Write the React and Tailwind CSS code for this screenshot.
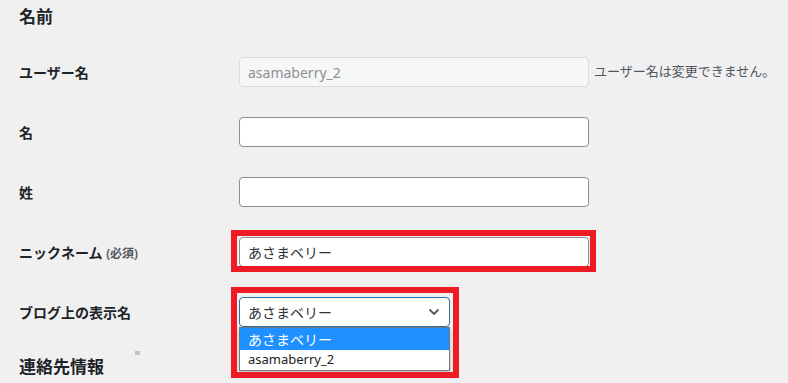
import React from 'react';

const font = { fontFamily: '"Noto Sans", "Noto Sans CJK JP", sans-serif' };

const Row = ({ label, children }) => (
    <div className="flex h-[60px] items-center">
        <div className="w-[220px] shrink-0 text-[14px] font-semibold text-[#1d2327]">{label}</div>
        {children}
    </div>
);

const TextInput = ({ value = '', disabled = false }) => (
    <div
        className={
            disabled
                ? 'flex h-[30px] w-[350px] items-center rounded-[4px] border border-[#dcdcde] bg-[#f6f7f7] px-[8px] text-[14px] text-[#8c8f94]'
                : 'flex h-[30px] w-[350px] items-center rounded-[4px] border border-[#8c8f94] bg-white px-[8px] text-[14px] text-[#2c3338]'
        }
    >
        {value}
    </div>
);

const App = () => {
    return (
        <div className="relative h-[383px] w-[788px] overflow-hidden bg-[#f0f0f1] pl-[19px]" style={font}>
            {/* 名前 */}
            <h2 className="text-[17px] font-semibold leading-[33px] text-[#1d2327]">名前</h2>

            <div className="mt-[9px]">
                <Row label="ユーザー名">
                    <TextInput value="asamaberry_2" disabled />
                    <span className="ml-[5px] whitespace-nowrap text-[13px] text-[#50575e]">ユーザー名は変更できません。</span>
                </Row>
                <Row label="名">
                    <TextInput />
                </Row>
                <Row label="姓">
                    <TextInput />
                </Row>
                <Row
                    label={
                        <>
                            ニックネーム <span className="text-[12px] text-[#50575e]">(必須)</span>
                        </>
                    }
                >
                    <div className="relative">
                        <TextInput value="あさまベリー" />
                        <div className="pointer-events-none absolute -bottom-[5px] -left-[8px] -right-[7px] -top-[7px] border-[6px] border-[#ed1c24]" />
                    </div>
                </Row>
                <Row label="ブログ上の表示名">
                    <div className="relative z-10 h-[30px] w-[211px]">
                        <div className="flex h-full items-center justify-between rounded-[4px] border border-[#2271b1] bg-white pl-[8px] pr-[9px] text-[14px] text-[#2c3338]">
                            <span>あさまベリー</span>
                            <svg width="12" height="8" viewBox="0 0 12 8" fill="none">
                                <path d="M1.5 1.5 L6 6 L10.5 1.5" stroke="#50575e" strokeWidth="1.8" />
                            </svg>
                        </div>
                        {/* open option list */}
                        <div className="absolute left-0 top-[30px] w-full border border-[#767676] bg-white shadow-[0_3px_6px_rgba(0,0,0,0.2)]">
                            <div className="flex h-[22px] items-center bg-[#1e90ff] pl-[8px] text-[14px] text-white">あさまベリー</div>
                            <div className="flex h-[20px] items-center pl-[8px] text-[13px] text-[#1d2327]">asamaberry_2</div>
                        </div>
                        <div className="pointer-events-none absolute -bottom-[51px] -left-[8px] -right-[9px] -top-[10px] border-[6px] border-[#ed1c24]" />
                    </div>
                </Row>
            </div>

            {/* 連絡先情報 */}
            <h2 className="mt-[8px] text-[17px] font-semibold leading-[33px] text-[#1d2327]">連絡先情報</h2>

            <div className="absolute left-[135px] top-[351px] h-[4px] w-[5px] bg-[#c3c3c3]" />
        </div>
    );
};

export default App;
